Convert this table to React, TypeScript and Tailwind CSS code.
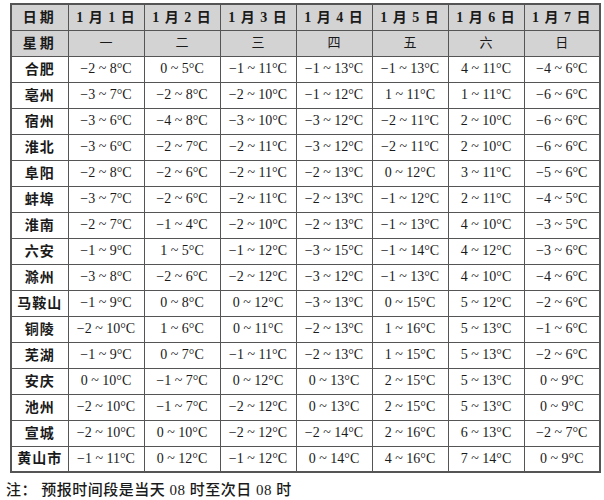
const days = ["1月1日", "1月2日", "1月3日", "1月4日", "1月5日", "1月6日", "1月7日"];
const weeks = ["一", "二", "三", "四", "五", "六", "日"];

const rows: [string, string[]][] = [
  ["合肥", ["−2 ~ 8°C", "0 ~ 5°C", "−1 ~ 11°C", "−1 ~ 13°C", "−1 ~ 13°C", "4 ~ 11°C", "−4 ~ 6°C"]],
  ["亳州", ["−3 ~ 7°C", "−2 ~ 8°C", "−2 ~ 10°C", "−1 ~ 12°C", "1 ~ 11°C", "1 ~ 11°C", "−6 ~ 6°C"]],
  ["宿州", ["−3 ~ 6°C", "−4 ~ 8°C", "−3 ~ 10°C", "−3 ~ 12°C", "−2 ~ 11°C", "2 ~ 10°C", "−6 ~ 6°C"]],
  ["淮北", ["−3 ~ 6°C", "−2 ~ 7°C", "−2 ~ 11°C", "−3 ~ 12°C", "−2 ~ 11°C", "2 ~ 10°C", "−6 ~ 6°C"]],
  ["阜阳", ["−2 ~ 8°C", "−2 ~ 6°C", "−2 ~ 11°C", "−2 ~ 13°C", "0 ~ 12°C", "3 ~ 11°C", "−5 ~ 6°C"]],
  ["蚌埠", ["−3 ~ 7°C", "−2 ~ 6°C", "−2 ~ 11°C", "−2 ~ 13°C", "−1 ~ 12°C", "2 ~ 11°C", "−4 ~ 5°C"]],
  ["淮南", ["−2 ~ 7°C", "−1 ~ 4°C", "−2 ~ 10°C", "−2 ~ 13°C", "−1 ~ 13°C", "4 ~ 10°C", "−3 ~ 5°C"]],
  ["六安", ["−1 ~ 9°C", "1 ~ 5°C", "−1 ~ 12°C", "−3 ~ 15°C", "−1 ~ 14°C", "4 ~ 12°C", "−3 ~ 6°C"]],
  ["滁州", ["−3 ~ 8°C", "−2 ~ 6°C", "−2 ~ 12°C", "−3 ~ 12°C", "−1 ~ 13°C", "4 ~ 10°C", "−4 ~ 6°C"]],
  ["马鞍山", ["−1 ~ 9°C", "0 ~ 8°C", "0 ~ 12°C", "−3 ~ 13°C", "0 ~ 15°C", "5 ~ 12°C", "−2 ~ 6°C"]],
  ["铜陵", ["−2 ~ 10°C", "1 ~ 6°C", "0 ~ 11°C", "−2 ~ 13°C", "1 ~ 16°C", "5 ~ 13°C", "−1 ~ 6°C"]],
  ["芜湖", ["−1 ~ 9°C", "0 ~ 7°C", "−1 ~ 11°C", "−2 ~ 13°C", "1 ~ 15°C", "5 ~ 13°C", "−2 ~ 6°C"]],
  ["安庆", ["0 ~ 10°C", "−1 ~ 7°C", "0 ~ 12°C", "0 ~ 13°C", "2 ~ 15°C", "5 ~ 13°C", "0 ~ 9°C"]],
  ["池州", ["−2 ~ 10°C", "−1 ~ 7°C", "−2 ~ 12°C", "0 ~ 13°C", "2 ~ 15°C", "5 ~ 13°C", "0 ~ 9°C"]],
  ["宣城", ["−2 ~ 10°C", "0 ~ 10°C", "−2 ~ 12°C", "−2 ~ 14°C", "2 ~ 16°C", "6 ~ 13°C", "−2 ~ 7°C"]],
  ["黄山市", ["−1 ~ 11°C", "0 ~ 12°C", "−1 ~ 12°C", "0 ~ 14°C", "4 ~ 16°C", "7 ~ 14°C", "0 ~ 9°C"]],
];

const font = "font-['Liberation_Serif','Noto_Sans_CJK_SC',serif]";

export default function App() {
  return (
    <div className={`w-[604px] h-[500px] bg-white text-[#1a1a1a] ${font}`}>
      <div className="pt-[3px] pl-[10px]">
        <table className="border-collapse border-2 border-[#555] table-fixed w-[590px]">
          <colgroup>
            <col className="w-[57px]" />
            {days.map((d) => (
              <col key={d} className="w-[76px]" />
            ))}
          </colgroup>
          <thead>
            <tr className="h-[26px] bg-[#d3d3d3]">
              <th className="border border-[#555] text-[14px] font-bold tracking-[3px]">日期</th>
              {days.map((d) => (
                <th key={d} className="border border-[#555] text-[14px] font-bold tracking-[1px]">
                  {d.replace(/(\d)/g, " $1 ").trim()}
                </th>
              ))}
            </tr>
            <tr className="h-[26px] bg-[#d3d3d3]">
              <th className="border border-[#555] text-[14px] font-semibold tracking-[3px]">星期</th>
              {weeks.map((w) => (
                <th key={w} className="border border-[#555] text-[13px] font-normal">
                  {w}
                </th>
              ))}
            </tr>
          </thead>
          <tbody>
            {rows.map(([city, vals]) => (
              <tr key={city} className="h-[26px]">
                <td className="border border-[#555] text-center text-[14px] font-semibold tracking-[1px]">
                  {city}
                </td>
                {vals.map((v, i) => (
                  <td key={i} className="border border-[#555] text-center text-[14px] leading-none">
                    {v}
                  </td>
                ))}
              </tr>
            ))}
          </tbody>
        </table>
      </div>
      <p className="pl-[6px] pt-[6px] text-[15px] font-medium tracking-[0.5px]">注：&nbsp;预报时间段是当天 08 时至次日 08 时</p>
    </div>
  );
}
